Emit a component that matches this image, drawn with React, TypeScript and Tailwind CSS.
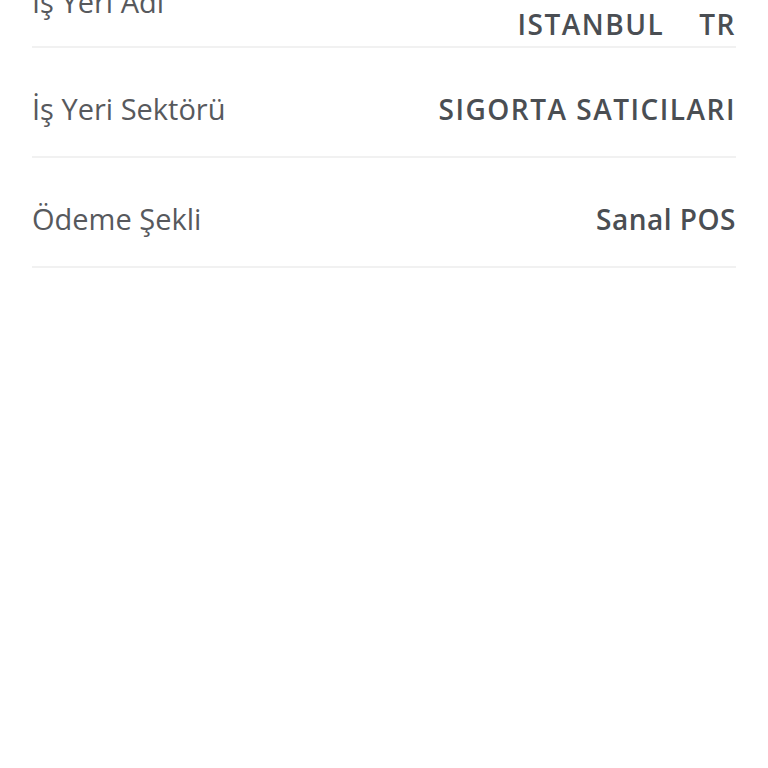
import React from 'react'

interface Row {
    label: string;
    value: string;
    caps?: boolean;
}

const rows: Row[] = [
    { label: 'İş Yeri Sektörü', value: 'SIGORTA SATICILARI', caps: true },
    { label: 'Ödeme Şekli', value: 'Sanal POS' },
]

export default function App() {
    return (
        <div className="w-[768px] h-[768px] overflow-hidden bg-white" style={{ fontFamily: '"Open Sans", "Noto Sans", sans-serif' }}>
            <div className="px-8 -mt-[62px]">
                {/* first row is scrolled past the top, value wraps to two lines */}
                <div className="flex items-center justify-between pt-5 border-b-2 border-[#f1f1f1]">
                    <span className="text-[29px] leading-[36px] text-[#57595d]">İş Yeri Adı</span>
                    <div className="flex flex-col items-end">
                        <span className="text-[28px] leading-[44px] font-semibold tracking-[1.5px] text-[#4a4e53]">ÖRNEK SİGORTA ARACILIK</span>
                        <span className="text-[28px] leading-[44px] font-semibold tracking-[1.5px] text-[#4a4e53] whitespace-pre">ISTANBUL    TR</span>
                    </div>
                </div>
                {rows.map((row) => (
                    <div key={row.label} className="flex items-center justify-between pt-[43px] pb-[29px] border-b-2 border-[#f1f1f1]">
                        <span className="text-[29px] leading-[36px] text-[#57595d]">{row.label}</span>
                        <span className={`text-[28px] leading-[36px] font-semibold text-[#4a4e53] ${row.caps ? 'tracking-[1.5px]' : 'tracking-[0.5px]'}`}>{row.value}</span>
                    </div>
                ))}
            </div>
        </div>
    )
}
